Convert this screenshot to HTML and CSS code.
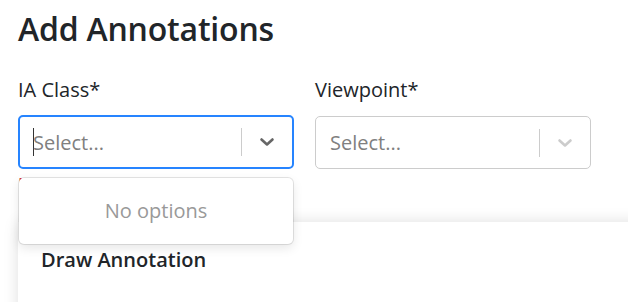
FILE: index.html
```html
<!DOCTYPE html>
<html lang="en">
<head>
    <meta charset="UTF-8">
    <meta name="viewport" content="width=device-width, initial-scale=1.0">
    <title>Add Annotations</title>
    <link rel="stylesheet" href="styles.css">
</head>
<body>
    <div class="page">
        <h2 class="title">Add Annotations</h2>

        <div class="fields">
            <div class="field">
                <label>IA Class*</label>
                <div class="select focused">
                    <div class="value"><span class="caret"></span>Select...</div>
                    <span class="sep"></span>
                    <span class="indicator">
                        <svg width="20" height="20" viewBox="0 0 20 20"><path d="M4.5 7.5 L10 12.5 L15.5 7.5" fill="none" stroke="currentColor" stroke-width="2.6" stroke-linecap="round" stroke-linejoin="round"/></svg>
                    </span>
                </div>
                <div class="error">No IA Classes configured</div>
                <div class="menu">No options</div>
            </div>

            <div class="field">
                <label>Viewpoint*</label>
                <div class="select disabled">
                    <div class="value">Select...</div>
                    <span class="sep"></span>
                    <span class="indicator">
                        <svg width="20" height="20" viewBox="0 0 20 20"><path d="M4.5 7.5 L10 12.5 L15.5 7.5" fill="none" stroke="currentColor" stroke-width="2.6" stroke-linecap="round" stroke-linejoin="round"/></svg>
                    </span>
                </div>
            </div>
        </div>

        <div class="card">
            <h5>Draw Annotation</h5>
        </div>
    </div>
</body>
</html>
```

FILE: styles.css
```css
:root {
    --text: #212529;
    --muted: #999;
    --border: #ccc;
    --focus: #2684ff;
    --danger: #dc3545;
}

html, body {
    margin: 0;
    padding: 0;
    background: #fff;
    overflow: hidden;
}

body {
    font-family: 'Open Sans', 'Noto Sans', Arial, sans-serif;
    color: var(--text);
}

.page {
    padding: 0 0 0 18px;
}

.title {
    margin: 0;
    padding-top: 9px;
    font-size: 32px;
    font-weight: 600;
    line-height: 40px;
    letter-spacing: -0.2px;
}

.fields {
    display: flex;
    gap: 21px;
    margin-top: 28px;
}

.field {
    position: relative;
    width: 276px;
}

.field label {
    display: block;
    font-size: 20px;
    line-height: 26px;
    margin-bottom: 13px;
}

.select {
    display: flex;
    align-items: center;
    box-sizing: border-box;
    height: 53px;
    border: 1px solid var(--border);
    border-radius: 5px;
    background: #fff;
}

.select.focused {
    border: 2px solid var(--focus);
    height: 54px;
    margin-top: -1px;
}

.select .value {
    flex: 1;
    display: flex;
    align-items: center;
    padding-left: 14px;
    font-size: 20px;
    color: #808080;
}

.select.focused .value {
    padding-left: 13px;
}

.caret {
    display: inline-block;
    width: 1px;
    height: 28px;
    background: #333;
    margin-right: -1px;
}

.sep {
    width: 1px;
    height: 28px;
    background: var(--border);
}

.indicator {
    width: 50px;
    display: flex;
    justify-content: center;
    color: #666;
}

.disabled .indicator {
    color: #ccc;
}

.error {
    margin-top: 4px;
    font-size: 17px;
    line-height: 22px;
    color: var(--danger);
}

.menu {
    position: absolute;
    left: 1px;
    right: 1px;
    top: 101px;
    z-index: 2;
    height: 66px;
    box-sizing: border-box;
    padding-top: 20px;
    text-align: center;
    font-size: 20px;
    line-height: 26px;
    color: var(--muted);
    background: #fff;
    border-radius: 5px;
    box-shadow: 0 0 0 1px rgba(0, 0, 0, 0.1), 0 4px 11px rgba(0, 0, 0, 0.1);
}

.card {
    margin-top: 27px;
    width: 660px;
    height: 120px;
    box-sizing: border-box;
    padding: 26px 23px;
    background: #fff;
    box-shadow: 0 0 14px rgba(0, 0, 0, 0.13);
}

.card h5 {
    margin: 0;
    font-size: 20px;
    font-weight: 600;
    line-height: 24px;
}
```
